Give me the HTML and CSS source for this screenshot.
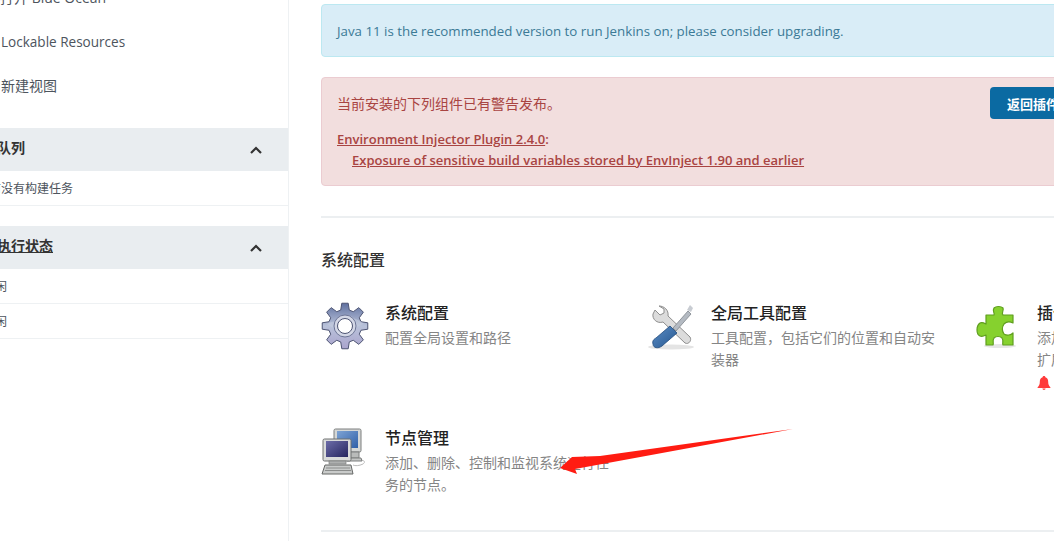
FILE: index.html
```html
<!DOCTYPE html>
<html lang="zh-CN">
<head>
<meta charset="UTF-8" />
<title>Jenkins 管理</title>
<link rel="stylesheet" href="styles.css">
</head>
<body>
<div class="page">
  <aside class="sidebar">
    <a class="side-link"><span class="cut-blue">打开 Blue Ocean</span></a>
    <a class="side-link latin">Lockable Resources</a>
    <a class="side-link">新建视图</a>

    <div class="side-head">
      <span class="cut-head">构建队列</span>
      <svg class="chevron" viewBox="0 0 12 8"><path d="M1 7 L6 2 L11 7" /></svg>
    </div>
    <div class="side-row"><span class="cut-empty">当前没有构建任务</span></div>

    <div class="side-head second">
      <span class="cut-head exec">构建执行状态</span>
      <svg class="chevron" viewBox="0 0 12 8"><path d="M1 7 L6 2 L11 7" /></svg>
    </div>
    <div class="side-row"><span class="cut-idle">1 空闲</span></div>
    <div class="side-row"><span class="cut-idle">2 空闲</span></div>
  </aside>

  <main class="main">
    <div class="alert alert-info">Java 11 is the recommended version to run Jenkins on; please consider upgrading.</div>

    <div class="alert alert-danger">
      <div class="alert-text">
        <p class="warn-title">当前安装的下列组件已有警告发布。</p>
        <p class="warn-line"><a>Environment Injector Plugin 2.4.0</a>:</p>
        <p class="warn-line indent"><a>Exposure of sensitive build variables stored by EnvInject 1.90 and earlier</a></p>
      </div>
      <button class="btn-back">返回插件管理器</button>
    </div>

    <hr class="rule">

    <h2 class="section-title">系统配置</h2>

    <div class="tools">
      <div class="tool">
        <svg class="tool-icon" viewBox="0 0 48 48">
          <defs>
            <linearGradient id="gearFill" x1="0" y1="0" x2="0" y2="1">
              <stop offset="0" stop-color="#5f709f" />
              <stop offset="0.5" stop-color="#b9c2da" />
              <stop offset="1" stop-color="#aaa4cd" />
            </linearGradient>
          </defs>
          <polygon fill="url(#gearFill)" stroke="#4d5473" stroke-width="1" points="19.73,8.06 20.8,1.22 27.2,1.22 28.27,8.06 32.25,9.71 37.84,5.63 42.37,10.16 38.29,15.75 39.94,19.73 46.78,20.8 46.78,27.2 39.94,28.27 38.29,32.25 42.37,37.84 37.84,42.37 32.25,38.29 28.27,39.94 27.2,46.78 20.8,46.78 19.73,39.94 15.75,38.29 10.16,42.37 5.63,37.84 9.71,32.25 8.06,28.27 1.22,27.2 1.22,20.8 8.06,19.73 9.71,15.75 5.63,10.16 10.16,5.63 15.75,9.71" />
          <path d="M6 22 C14 16 22 24 30 14 C34 18 40 18 43 22 C36 24 30 30 22 28 C16 26 10 26 6 22 Z" fill="#c6cde0" opacity="0.55" />
          <circle cx="24" cy="24" r="11" fill="#d3d7e6" stroke="#6d7596" />
          <circle cx="24" cy="24" r="7.5" fill="#fff" stroke="#4d5473" />
        </svg>
        <div class="tool-text">
          <h3>系统配置</h3>
          <p>配置全局设置和路径</p>
        </div>
      </div>

      <div class="tool">
        <svg class="tool-icon" viewBox="0 0 48 48">
          <defs>
            <linearGradient id="toolBlue" x1="0" y1="0" x2="1" y2="1">
              <stop offset="0" stop-color="#5d8ec6" />
              <stop offset="1" stop-color="#24568f" />
            </linearGradient>
          </defs>
          <ellipse cx="24" cy="45" rx="23" ry="2.5" fill="#e4e4e4" />
          <path d="M8 8 L13 13 L17 11 L17 7 L12 4 C17 4 22 8 21 14 L43 35 C45 38 42 43 38 41 L16 20 C10 22 5 17 6 12 Z" fill="#dcdcdc" stroke="#8e8e8e" stroke-linejoin="round" />
          <path d="M40 8 L44 10 L46 6 L43 3 Z" fill="#c8ccd2" />
          <path d="M26 26 L41 9 L44 12 L29 29 Z" fill="#b4bac2" stroke="#7f858c" stroke-width="0.8" />
          <path d="M23 24 L30 31 L15 44 C11 47 6 46 6 42 C5 39 7 37 9 36 Z" fill="url(#toolBlue)" stroke="#1f4a7c" stroke-width="0.8" />
        </svg>
        <div class="tool-text">
          <h3>全局工具配置</h3>
          <p>工具配置，包括它们的位置和自动安装器</p>
        </div>
      </div>

      <div class="tool">
        <svg class="tool-icon" viewBox="-1 -1 48 48">
          <ellipse cx="26" cy="43" rx="16" ry="2" fill="#e6e6e6" />
          <path d="M12 12 H20 C21 10 18 8 20 5 C22 3 27 3 29 5 C30 8 27 10 29 12 H39 V20 C37 19 33 18 30 21 C28 24 28 28 30 31 C33 33 37 32 39 30 V42 H29 C28 40 30 38 28 35 C26 33 22 33 20 35 C18 38 20 40 19 42 H12 V32 C10 33 8 34 6 33 C2 31 2 23 6 20 C8 19 10 20 12 21 Z" fill="#86d12e" stroke="#5f9e1f" stroke-width="1.2" stroke-linejoin="round" />
        </svg>
        <div class="tool-text">
          <h3>插件管理</h3>
          <p class="nowrap">添加、删除、禁用或启用Jenkins功能<br>扩展插件。</p>
          <svg class="bell" viewBox="0 0 14 14"><path d="M7 0 C8 0 8.4 .6 8.4 1.3 C10.6 2 11.2 4 11.2 6 C11.2 8.6 12 10 13.4 11.2 V12 H.6 V11.2 C2 10 2.8 8.6 2.8 6 C2.8 4 3.4 2 5.6 1.3 C5.6 .6 6 0 7 0 Z M5.4 12.6 H8.6 C8.4 13.6 7.8 14 7 14 C6.2 14 5.6 13.6 5.4 12.6 Z" /></svg>
        </div>
      </div>

      <div class="tool">
        <svg class="tool-icon" viewBox="0 0 48 48">
          <defs>
            <linearGradient id="screenBack" x1="0" y1="0" x2="1" y2="1">
              <stop offset="0" stop-color="#7ea3d4" />
              <stop offset="1" stop-color="#2f5fa8" />
            </linearGradient>
            <linearGradient id="screenFront" x1="0" y1="0" x2="1" y2="1">
              <stop offset="0" stop-color="#6c6ca8" />
              <stop offset="1" stop-color="#25255f" />
            </linearGradient>
          </defs>
          <path d="M30 33 C42 32 46 34 42 37 C38 39 34 39 32 38" fill="none" stroke="#bbb" />
          <rect x="13" y="2" width="27" height="23" rx="1.5" fill="#d5d7d6" stroke="#7d7f7e" />
          <rect x="16" y="4" width="21" height="17" fill="url(#screenBack)" />
          <rect x="22" y="25" width="16" height="6" fill="#b9bbba" stroke="#7d7f7e" />
          <path d="M26 31 H40 L41 34 H26 Z" fill="#c4c6c5" stroke="#7d7f7e" />
          <rect x="2" y="12" width="28" height="22" rx="1.5" fill="#d9dbda" stroke="#6f7170" />
          <rect x="5" y="14" width="22" height="16" fill="url(#screenFront)" />
          <rect x="8" y="34" width="17" height="3" fill="#aeb0af" stroke="#7d7f7e" stroke-width="0.7" />
          <path d="M4 38 H30 L32 47 H1 Z" fill="#c9cbca" stroke="#666867" stroke-linejoin="round" />
          <path d="M5 41 H29 M4 43.5 H30" stroke="#8b8d8c" stroke-width="1" />
        </svg>
        <div class="tool-text">
          <h3>节点管理</h3>
          <p>添加、删除、控制和监视系统运行任务的节点。</p>
        </div>
      </div>
    </div>

    <hr class="rule rule-end">
  </main>
</div>

<svg class="annotation" viewBox="0 0 240 50" aria-hidden="true">
  <polygon points="233,0 40,27 12,28 0,39 17,45 15,40" fill="#ff1c12" />
</svg>
</body>
</html>
```

FILE: styles.css
```css
* {
  box-sizing: border-box;
}
html, body {
  margin: 0;
  height: 541px;
  overflow: hidden;
}
body {
  background: #fff;
  color: #333;
  font-family: 'Open Sans', 'Noto Sans CJK SC', sans-serif;
  font-size: 14px;
  position: relative;
}
.page {
  display: flex;
  align-items: stretch;
  height: 541px;
}

/* sidebar, scrolled so its left and top edges are cut */
.sidebar {
  flex: none;
  width: 289px;
  height: 565px;
  margin-top: -24px;
  border-right: 1px solid #eef1f3;
  white-space: nowrap;
  overflow: hidden;
}
.side-link {
  display: flex;
  align-items: center;
  height: 44px;
  padding-left: 1px;
  padding-bottom: 2px;
  color: #4d545d;
}
.side-link.latin {
  font-size: 13.55px;
  padding-bottom: 0;
}
.side-head {
  display: flex;
  align-items: center;
  justify-content: space-between;
  height: 43px;
  margin-top: 20px;
  padding-right: 26px;
  background: #e9edf0;
  font-weight: 700;
  color: #333;
}
.side-row {
  display: flex;
  align-items: center;
  height: 35px;
  padding-left: 1px;
  border-bottom: 1px solid #eef1f3;
  font-size: 12px;
  color: #4d545d;
}
.cut-blue {
  margin-left: -1px;
}
.cut-head {
  margin-left: -31px;
  position: relative;
  top: -3px;
}
.exec {
  text-decoration: underline;
}
.cut-empty {
  margin-left: -24px;
}
.cut-idle {
  margin-left: -28px;
}
.chevron {
  width: 12px;
  height: 8px;
  fill: none;
  stroke: #333;
  stroke-width: 2.2;
}

/* main column runs past the window on the right */
.main {
  flex: none;
  width: 842px;
  padding: 4px 0 0 32px;
}
.alert {
  border: 1px solid transparent;
  border-radius: 4px;
  line-height: 21px;
}
.alert-info {
  height: 53px;
  padding: 16px 15px 14px;
  background: #d9edf7;
  border-color: #bce8f1;
  color: #3b7a96;
  font-size: 13.3px;
  margin-bottom: 20px;
}
.alert-danger {
  display: flex;
  justify-content: space-between;
  align-items: flex-start;
  height: 109px;
  padding: 9px 15px 15px;
  background: #f2dede;
  border-color: #ebccd1;
  color: #a94442;
}
.alert-text p {
  margin: 0;
}
.warn-title {
  padding-top: 6px;
  margin-bottom: 15px !important;
}
.warn-line {
  font-size: 13px;
  font-weight: 600;
}
.warn-line a {
  text-decoration: underline;
}
.indent {
  padding-left: 15px;
}
.btn-back {
  flex: none;
  height: 32px;
  padding: 0 17px;
  border: none;
  border-radius: 4px;
  background: #0b6aa2;
  color: #fff;
  font-family: inherit;
  font-size: 13px;
  font-weight: 700;
}
.rule {
  height: 2px;
  margin: 30px 0 0;
  border: none;
  background: #eceff1;
}
.rule-end {
  margin-top: 34px;
}
.section-title {
  margin: 32px 0 32px;
  font-size: 16px;
  font-weight: 500;
  line-height: 20px;
  color: #333;
}
.tools {
  display: grid;
  grid-template-columns: repeat(3, 326px);
  row-gap: 37px;
}
.tool {
  display: flex;
  gap: 16px;
}
.tool-icon {
  flex: none;
  width: 48px;
  height: 48px;
}
.tool-text {
  width: 224px;
}
.tool-text h3 {
  margin: 0 0 3px;
  font-size: 16px;
  font-weight: 500;
  line-height: 22px;
  color: #222;
}
.tool-text p {
  margin: 0;
  line-height: 22px;
  color: #858585;
}
.tool-text p.nowrap {
  white-space: nowrap;
}
.bell {
  display: block;
  width: 14px;
  height: 14px;
  margin-top: 5px;
  fill: #ff3b3b;
}

/* red arrow drawn over the screenshot */
.annotation {
  position: absolute;
  left: 560px;
  top: 429px;
  width: 240px;
  height: 50px;
}
```
